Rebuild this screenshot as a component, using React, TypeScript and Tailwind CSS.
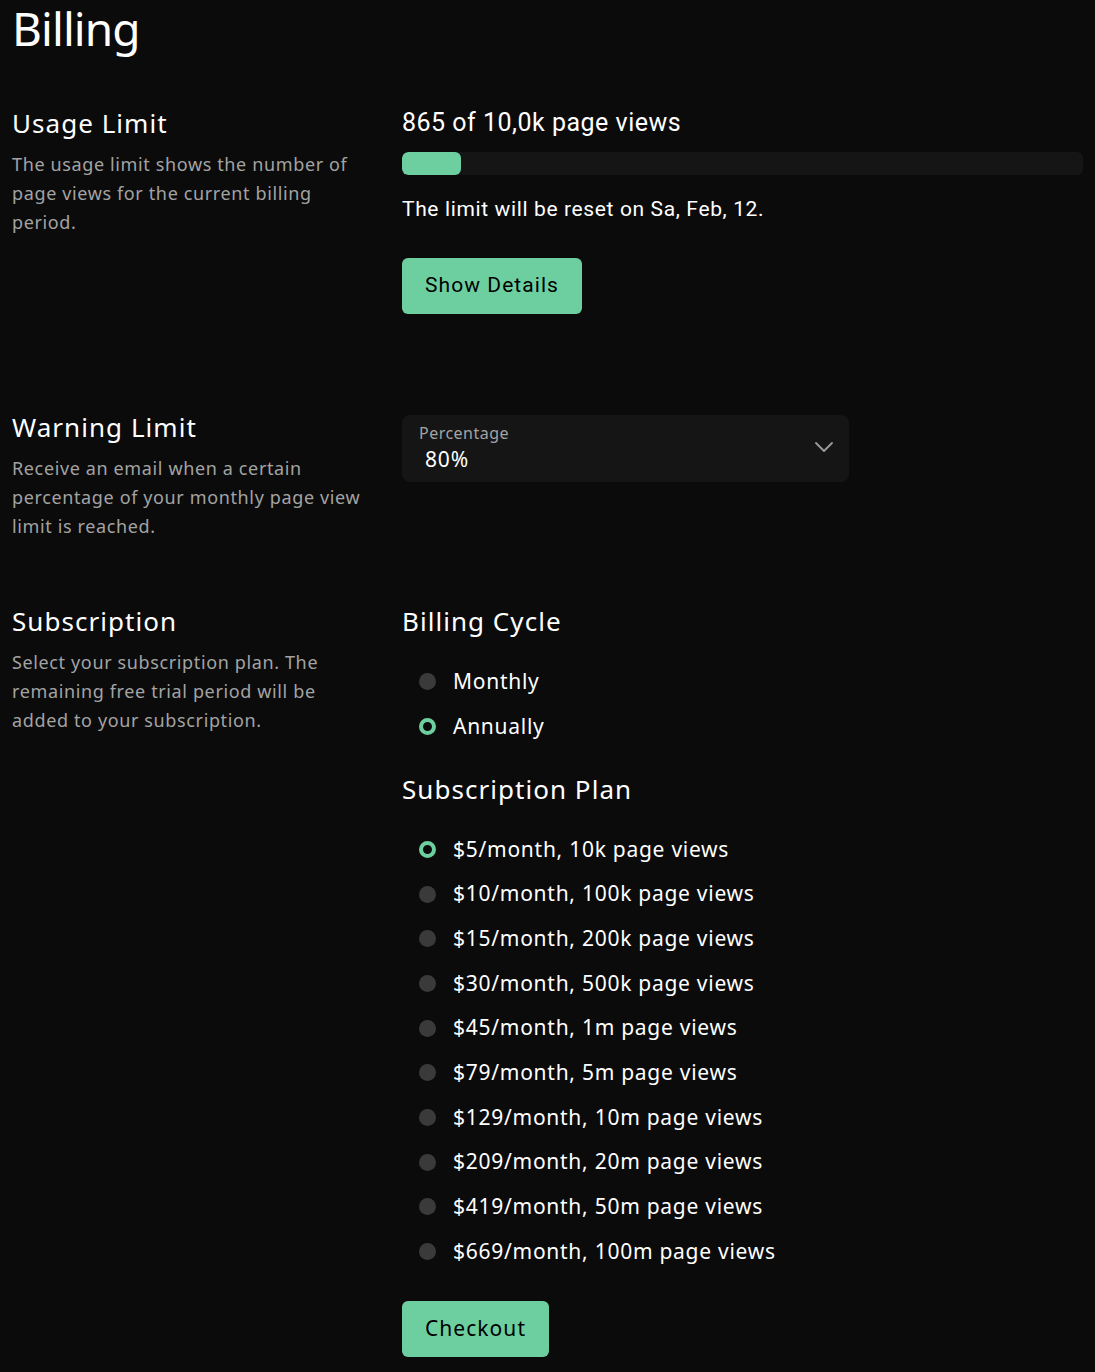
import { ChevronDown } from "lucide-react";

const plans = [
  "$5/month, 10k page views",
  "$10/month, 100k page views",
  "$15/month, 200k page views",
  "$30/month, 500k page views",
  "$45/month, 1m page views",
  "$79/month, 5m page views",
  "$129/month, 10m page views",
  "$209/month, 20m page views",
  "$419/month, 50m page views",
  "$669/month, 100m page views",
];

const Radio = ({
  label,
  checked,
  rowClass,
}: {
  label: string;
  checked?: boolean;
  rowClass: string;
}) => (
  <label className={`flex items-center gap-[17px] pl-[17px] cursor-pointer ${rowClass}`}>
    {checked ? (
      <span className="w-[17px] h-[17px] rounded-full border-[4px] border-[#6dcf9f] bg-[#0b0b0b]" />
    ) : (
      <span className="w-[17px] h-[17px] rounded-full bg-[#3a3a3a]" />
    )}
    <span className="text-[21px] tracking-[0.035em] text-white">{label}</span>
  </label>
);

const Section = ({
  title,
  text,
  children,
}: {
  title: string;
  text: string;
  children: React.ReactNode;
}) => (
  <section className="grid grid-cols-[390px_1fr]">
    <div>
      <h2 className="text-[26px] leading-[34px] tracking-[0.04em] text-white">{title}</h2>
      <p className="mt-[10px] max-w-[352px] text-[18px] leading-[29px] tracking-[0.035em] text-[#a3a3a3]">
        {text}
      </p>
    </div>
    <div>{children}</div>
  </section>
);

const roboto = { fontFamily: "Roboto, sans-serif" };

export default function App() {
  const used = 865;
  const limit = 10000;

  return (
    <div
      className="min-h-screen bg-[#0b0b0b] px-3 pb-4 text-white"
      style={{ fontFamily: '"Noto Sans", sans-serif' }}
    >
      <h1 className="text-[46px] leading-[56px] tracking-[-0.02em]">Billing</h1>

      <div className="mt-[50px]">
        <Section
          title="Usage Limit"
          text="The usage limit shows the number of page views for the current billing period."
        >
          <p className="text-[25px] leading-[34px] tracking-[0.02em]" style={roboto}>
            865 of 10,0k page views
          </p>
          <div className="mt-[12px] h-[23px] rounded-md bg-[#151515] overflow-hidden">
            <div
              className="h-full rounded-md bg-[#6dcf9f]"
              style={{ width: `${(used / limit) * 100}%` }}
            />
          </div>
          <p className="mt-[20px] text-[21px] leading-[28px] tracking-[0.03em]" style={roboto}>
            The limit will be reset on Sa, Feb, 12.
          </p>
          <button
            className="mt-[35px] h-[56px] w-[180px] rounded-md bg-[#6dcf9f] text-[21px] tracking-[0.05em] text-black"
            style={roboto}
          >
            Show Details
          </button>
        </Section>
      </div>

      <div className="mt-[96px]">
        <Section
          title="Warning Limit"
          text="Receive an email when a certain percentage of your monthly page view limit is reached."
        >
          <div className="relative mt-[5px] h-[67px] w-[447px] rounded-lg bg-[#151515] pl-[17px] pt-[7px]">
            <div className="text-[16px] leading-[22px] tracking-[0.03em] text-[#a3a3a3]">
              Percentage
            </div>
            <div className="pl-[6px] text-[21px] leading-[30px] tracking-[0.04em] text-white">
              80%
            </div>
            <ChevronDown
              className="absolute right-[9px] top-[16px] text-[#9a9a9a]"
              size={32}
              strokeWidth={1.4}
            />
          </div>
        </Section>
      </div>

      <div className="mt-[63px]">
        <Section
          title="Subscription"
          text="Select your subscription plan. The remaining free trial period will be added to your subscription."
        >
          <h3 className="text-[26px] leading-[34px] tracking-[0.04em]">Billing Cycle</h3>
          <div className="mt-[21px]">
            <Radio label="Monthly" rowClass="h-[45px]" />
            <Radio label="Annually" checked rowClass="h-[45px]" />
          </div>
          <h3 className="mt-[23px] text-[26px] leading-[34px] tracking-[0.04em]">
            Subscription Plan
          </h3>
          <div className="mt-[21px]">
            {plans.map((p, i) => (
              <Radio key={p} label={p} checked={i === 0} rowClass="h-[44.7px]" />
            ))}
          </div>
          <button className="mt-[27px] h-[56px] w-[147px] rounded-md bg-[#6dcf9f] text-[21px] tracking-[0.05em] text-black">
            Checkout
          </button>
        </Section>
      </div>
    </div>
  );
}
